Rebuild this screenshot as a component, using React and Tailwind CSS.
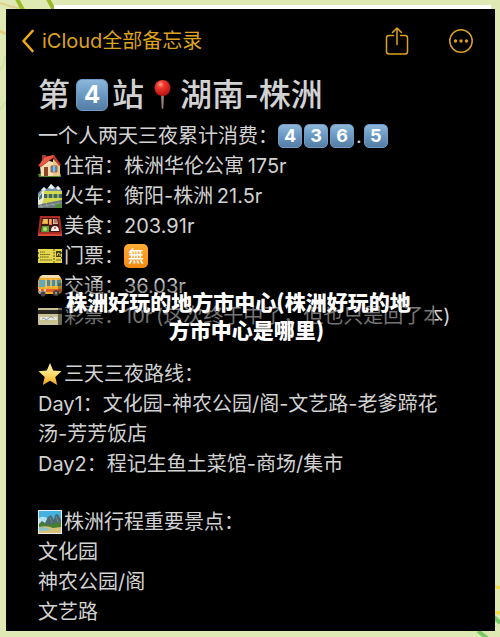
const ICON = 'size-6 shrink-0 mr-0.5'

// full-width punctuation
const COLON = '\uff1a'
const COMMA = '\uff0c'
const THIN = '\u2009'

const Backdrop = () => (
  <>
    <svg className="absolute left-0 top-0 w-16 h-44" viewBox="0 0 64 176" fill="none" aria-hidden="true">
      <path d="M0 3c5 2 16 5 22 6" stroke="#ddd08a" strokeWidth="2" />
      <path d="M0 31l6 3" stroke="#e3cf77" strokeWidth="3" />
      <path d="M0 70q5-5 5-14M0 110l6-9" stroke="#d2e3a4" strokeWidth="2" />
      <path d="M17-1l6 11M48-1l6 11" stroke="#9abc28" strokeWidth="4" />
    </svg>
    <svg className="absolute right-0 bottom-0 w-10 h-16" viewBox="0 0 40 64" fill="none" aria-hidden="true">
      <path d="M34 12l6 2M34 38l6 1" stroke="#f2dc3a" strokeWidth="3" />
      <path d="M34 43l6 6M18 57l9 7" stroke="#76ca61" strokeWidth="4" />
    </svg>
  </>
)

const Keycap = ({ children, large }) => (
  <span
    className={`inline-flex shrink-0 items-center justify-center font-bold text-white
      bg-linear-to-b from-[#8db7da] via-[#6998c2] to-[#557da5] border border-[#6f9bc4]
      ${large ? 'size-8 rounded-md text-2xl' : 'size-6 rounded-[5px] text-lg mr-0.5'}`}
  >
    {children}
  </span>
)

const Pin = () => (
  <svg className="w-9 h-8 shrink-0" viewBox="0 0 36 32" aria-hidden="true">
    <defs>
      <radialGradient id="pin" cx=".38" cy=".28" r=".75">
        <stop offset="0" stopColor="#ff9d8c" />
        <stop offset=".3" stopColor="#f03a2d" />
        <stop offset="1" stopColor="#b40f10" />
      </radialGradient>
    </defs>
    <path d="M17 15h3l-.7 14q-.8 2-1.6 0z" fill="#9a8278" />
    <circle cx="18.500" cy="9" r="8" fill="url(#pin)" />
  </svg>
)

const House = () => (
  <svg className={ICON} viewBox="0 0 24 24" aria-hidden="true">
    <path d="M0 20q12-3 23 0v3H1z" fill="#4f8c2f" />
    <path d="M4 1h4v9H4z" fill="#a5362a" />
    <path d="M2 11l6-5 14 4v12H3z" fill="#f3dfb0" />
    <path d="M15 5l7 6v11h-7z" fill="#e6c98e" />
    <path d="M0 12L7 3l9-2 7 10-2 1-6-8L3 13z" fill="#c93a2e" />
    <path d="M7 3l9-2-2 3L3 12l-2-1z" fill="#e85c45" />
    <path d="M6 13h4v9H6z" fill="#8f4527" />
    <path d="M13 12h6v6h-6z" fill="#3b8cc9" stroke="#a8643a" />
    <path d="M16 12v6" stroke="#d4eafa" />
  </svg>
)

const Train = () => (
  <svg className={ICON} viewBox="0 0 24 24" aria-hidden="true">
    <path d="M0 9l6-6 3 2 4-5 4 4 3-2 4 5v6H0z" fill="#7892a5" />
    <path d="M3 6l3-3 2 3-2 1zM10 4l3-4 4 4-3 1zM18 4l2-2 3 3-3 1z" fill="#e9f2f7" />
    <path d="M0 13h24v11H0z" fill="#69777b" />
    <path d="M0 14l5-7h19v9L3 20z" fill="#d3d74a" />
    <path d="M6 10h18v4H6z" fill="#3f6854" />
    <path d="M10 9v6M15 9v6M20 9v6" stroke="#eceb80" />
    <path d="M0 14l4-7h2v7l-2 6-4 1z" fill="#e9edda" />
    <path d="M1 13l3-4v5l-3 2z" fill="#49717d" />
    <path d="M0 23l24-4M2 20l2 4M8 19l2 4M14 19l2 3M20 18l2 3" stroke="#98a5a3" />
    <path d="M18 21q3-3 6-1v4h-7z" fill="#528a38" />
  </svg>
)

const Bento = () => (
  <svg className={ICON} viewBox="0 0 24 24" aria-hidden="true">
    <path d="M2 2h20l2 17v2H0v-2z" fill="#aa2c25" />
    <path d="M4 4h16l2 14H2z" fill="#401a18" />
    <path d="M5 5h5v5H4z" fill="#dda63d" />
    <path d="M11 5h3v6h-3z" fill="#f27735" />
    <path d="M15 5h4l1 5h-5z" fill="#d9b8a0" />
    <path d="M12 5v5M6 6h3M5 8h4" stroke="#ffdb70" />
    <path d="M16 6h3M16 8h3" stroke="#8d4038" />
    <path d="M4 12h7v6H3z" fill="#5d9c38" />
    <circle cx="7" cy="15" r="2" fill="#b8df6b" />
    <path d="M13 17q0-5 4-5t4 5z" fill="#f4eee7" />
    <circle cx="17" cy="14" r="1" fill="#d03c3c" />
    <path d="M0 20h24v2H0z" fill="#d94b35" />
  </svg>
)

const Ticket = () => (
  <svg className={ICON} viewBox="0 0 24 24" aria-hidden="true">
    <path d="M0 5h24v3l-1 1 1 1v3l-1 1 1 1v4H0v-4l1-1-1-1v-3l1-1-1-1z" fill="#e5d64c" />
    <path d="M2 8h5M2 10.500h10M2 13h9M2 16h12" stroke="#665f28" strokeDasharray="1.500 .6" />
    <path d="M16 5v14" stroke="#554f20" strokeDasharray="2 1" />
    <path d="M18 7h5v6h-5z" fill="#403b20" />
    <path d="M19 12l1-3 2 1v2" stroke="#e5d64c" fill="none" />
    <path d="M18 16h5" stroke="#665f28" />
  </svg>
)

const Bus = () => (
  <svg className={ICON} viewBox="0 0 24 24" aria-hidden="true">
    <path d="M2 2q9-2 20 0l2 4v12l-3 2H2l-2-3V7z" fill="#f0ad2e" />
    <path d="M4 1h17l1 3H2z" fill="#f6ddb0" />
    <path d="M1 6h7v7H1z" fill="#61a9bd" />
    <path d="M9 6h14v6H9z" fill="#498c9e" />
    <path d="M13 5v8M18 5v8M8 5v9" stroke="#f4c763" strokeWidth="1.500" />
    <path d="M0 15h24v3H0z" fill="#e4612a" />
    <path d="M0 17h8v3H1z" fill="#a8a79f" />
    <circle cx="2" cy="16" r="1" fill="#fff1b3" />
    <circle cx="7" cy="16" r="1" fill="#fff1b3" />
    <circle cx="5" cy="20" r="2.500" fill="#4a4542" />
    <circle cx="18" cy="19" r="3" fill="#4a4542" />
    <circle cx="18" cy="19" r="1" fill="#aaa" />
  </svg>
)

const Card = () => (
  <svg className={ICON} viewBox="0 0 24 24" aria-hidden="true">
    <rect y="4" width="24" height="17" rx="1" fill="#c9c294" />
    <path d="M0 6h24v4H0z" fill="#28251e" />
    <path d="M2 13h17v3H2z" fill="#e6e7e2" />
    <path d="M4 15q2-2 3 0t4-1 5 1" stroke="#77797e" fill="none" strokeWidth=".7" />
  </svg>
)

const Star = () => (
  <svg className={ICON} viewBox="0 0 24 24" aria-hidden="true">
    <defs>
      <linearGradient id="star" x1="0" y1="0" x2="0" y2="1">
        <stop offset="0" stopColor="#ffe9a0" />
        <stop offset=".45" stopColor="#ffe27a" />
        <stop offset="1" stopColor="#f5a31a" />
      </linearGradient>
    </defs>
    <path d="M12 1l3.200 7.500 8.300.8-6.200 5.600 1.900 8.100L12 18.800 4.800 23l1.900-8.100L.5 9.300l8.300-.8z" fill="url(#star)" />
  </svg>
)

const Landscape = () => (
  <svg className={ICON} viewBox="0 0 24 24" aria-hidden="true">
    <path d="M0 0h24v24H0z" fill="#e6eee7" />
    <path d="M1 1h22v22H1z" fill="#45b1e0" />
    <path d="M1 8q5-3 9 1v5H1z" fill="#b0e3ed" />
    <path d="M1 14l3-3 3 2 3-6 3-2 3 5 1-5 3-1 3 6v8H1z" fill="#4c6871" />
    <path d="M12 7l2 6M18 6l2 6" stroke="#6f878a" fill="none" />
    <path d="M1 14q5-3 8 1l14-3v7H1z" fill="#467e32" />
    <path d="M1 17q8-2 14 1l8-1v6H1z" fill="#d6bf78" />
    <path d="M1 17q8 0 12 3l-12 1z" fill="#88c3c5" />
  </svg>
)

const FreeSign = () => (
  <span className="inline-flex size-6 shrink-0 items-center justify-center rounded-[5px]
                   bg-linear-to-b from-[#ffad35] to-[#f28a0b] text-base font-medium text-white">
    無
  </span>
)

const expenses = [
  { Icon: House, label: '住宿', value: `株洲华伦公寓${THIN}175r` },
  { Icon: Train, label: '火车', value: `衡阳-株洲${THIN}21.5r` },
  { Icon: Bento, label: '美食', value: '203.91r' },
  { Icon: Ticket, label: '门票', value: <FreeSign /> },
  { Icon: Bus, label: '交通', value: '36.03r' },
  { Icon: Card, label: '彩票', value: `10r${THIN}(这次终于中了${COMMA}但也只是回了本)` },
]

const Toolbar = () => (
  <header className="flex items-center h-14 pt-2 pl-4 pr-[22px] text-[#dca11f]">
    <button type="button" className="flex items-center gap-2 text-xl whitespace-nowrap">
      <svg className="w-3 h-6" viewBox="0 0 12 24" fill="none" stroke="#efad12" strokeWidth="2.600" strokeLinecap="round" strokeLinejoin="round" aria-hidden="true">
        <path d="M10.500 2L1.500 12l9 10" />
      </svg>
      <span>iCloud全部备忘录</span>
    </button>
    <div className="ml-auto flex items-center gap-10">
      <button type="button" aria-label="Share">
        <svg className="w-6 h-7" viewBox="0 0 24 28" fill="none" stroke="currentColor" strokeWidth="1.500" strokeLinecap="round" strokeLinejoin="round">
          <path d="M8.500 8.500H4A2.500 2.500 0 0 0 1.500 11v13.500A2.500 2.500 0 0 0 4 27h16a2.500 2.500 0 0 0 2.500-2.500V11A2.500 2.500 0 0 0 20 8.500h-4.500M12 17.500V1.500M7.500 5.500L12 1l4.500 4.500" />
        </svg>
      </button>
      <button type="button" aria-label="More">
        <svg className="size-6" viewBox="0 0 24 24" fill="none" stroke="currentColor" strokeWidth="1.500">
          <circle cx="12" cy="12" r="11.200" />
          <g fill="currentColor" stroke="none">
            <circle cx="6.500" cy="12" r="1.700" />
            <circle cx="12" cy="12" r="1.700" />
            <circle cx="17.500" cy="12" r="1.700" />
          </g>
        </svg>
      </button>
    </div>
  </header>
)

export default function App() {
  return (
    <div className="relative overflow-hidden bg-[#dfe9b3] pt-[5px] pr-[5px] pb-[7px] pl-[6px]
                    font-[Inter,'Noto_Sans_CJK_SC',sans-serif]">
      <Backdrop />
      <div className="relative ml-12 mr-1 h-1 bg-white" />
      <main className="relative bg-black text-[#d2d2d2] text-xl leading-[30px]">
        <Toolbar />

        <article className="px-8 pt-2 pb-1">
          <h1 className="flex items-center h-11 text-[32px] font-medium whitespace-nowrap">
            <span className="mr-1.5">第</span>
            <Keycap large>4</Keycap>
            <span className="ml-1">站</span>
            <Pin />
            <span>湖南-株洲</span>
          </h1>

          <section className="relative pt-1">
            <p className="flex items-center whitespace-nowrap">
              <span>一个人两天三夜累计消费{COLON}</span>
              <Keycap>4</Keycap>
              <Keycap>3</Keycap>
              <Keycap>6</Keycap>
              <span className="mr-0.5">.</span>
              <Keycap>5</Keycap>
            </p>
            {expenses.map(({ Icon, label, value }) => (
              <p key={label} className="flex items-center whitespace-nowrap">
                <Icon />
                <span>{label}{COLON}</span>
                {value}
              </p>
            ))}

            <div className="absolute left-5 right-7 -bottom-4 flex flex-col items-center py-1
                            bg-linear-to-b from-black/25 via-black/45 to-black/50
                            text-[21px] leading-7 font-black text-white whitespace-nowrap
                            font-['Noto_Sans_CJK_SC',sans-serif]">
              <span className="pr-4">株洲好玩的地方市中心(株洲好玩的地</span>
              <span>方市中心是哪里)</span>
            </div>
          </section>

          <section className="mt-7">
            <h2 className="flex items-center">
              <Star />
              三天三夜路线{COLON}
            </h2>
            <p>Day1{COLON}文化园-神农公园/阁-文艺路-老爹蹄花汤-芳芳饭店</p>
            <p>Day2{COLON}程记生鱼土菜馆-商场/集市</p>
          </section>

          <section className="mt-7">
            <h2 className="flex items-center">
              <Landscape />
              株洲行程重要景点{COLON}
            </h2>
            <p>文化园</p>
            <p>神农公园/阁</p>
            <p>文艺路</p>
          </section>
        </article>
      </main>
    </div>
  )
}
